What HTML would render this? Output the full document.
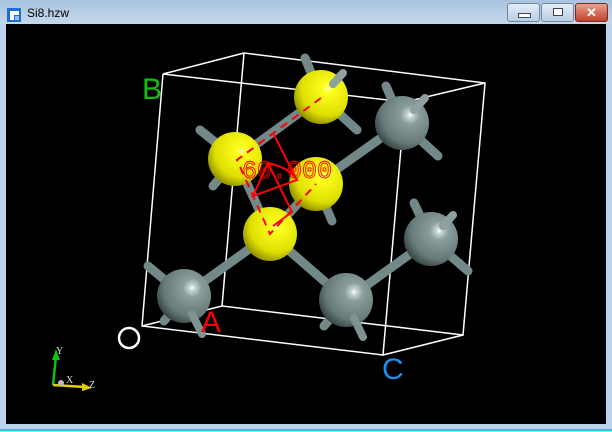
<!DOCTYPE html>
<html><head><style>
body{margin:0;width:612px;height:432px;overflow:hidden;background:#bcd3ea;font-family:"Liberation Sans",sans-serif;position:relative}
.tb{position:absolute;left:0;top:0;width:612px;height:24px;background:linear-gradient(#a9c3df,#c4d8ec)}
.title{position:absolute;left:27px;top:6px;font-size:12px;color:#000}
.btn{position:absolute;top:3px;width:31px;height:17px;border:1px solid #6b85a3;border-radius:3px;background:linear-gradient(#e4edf7,#b9cde3)}
.vp{position:absolute;left:6px;top:24px;width:600px;height:400px;background:#000}
</style></head><body>
<div class="tb"></div>
<svg style="position:absolute;left:7px;top:8px" width="14" height="14"><rect width="14" height="14" fill="#1b6fd0"/><rect x="3" y="3" width="9" height="4" fill="#fff"/><rect x="3" y="3" width="4" height="9" fill="#fff"/><rect x="8" y="8" width="4" height="4" fill="#8fc0f0"/></svg>
<div class="title">Si8.hzw</div>
<div class="btn" style="left:507px"><div style="position:absolute;left:10px;top:9px;width:11px;height:3px;background:#fff;border:1px solid #445"></div></div>
<div class="btn" style="left:541px"><div style="position:absolute;left:11px;top:4px;width:8px;height:6px;background:#fff;border:1px solid #445"></div></div>
<div class="btn" style="left:575px;background:linear-gradient(#e7a08f,#c2432c);border-color:#7a2a20;color:#fff;font-weight:bold;font-size:13px;text-align:center;line-height:17px">✕</div>
<div class="vp"></div>
<div style="position:absolute;left:0;top:429px;width:612px;height:2px;background:#3cc3d8"></div>
<svg style="position:absolute;left:0;top:0" width="612" height="432">
<defs>
<radialGradient id="y" cx="0.62" cy="0.35" r="0.7"><stop offset="0" stop-color="#ffffe0"/><stop offset="0.1" stop-color="#ffff20"/><stop offset="0.7" stop-color="#dede00"/><stop offset="1" stop-color="#8a8a00"/></radialGradient>
<radialGradient id="g" cx="0.65" cy="0.35" r="0.7"><stop offset="0" stop-color="#ffffff"/><stop offset="0.08" stop-color="#c8d4d4"/><stop offset="0.25" stop-color="#8a9c9c"/><stop offset="0.75" stop-color="#667a7a"/><stop offset="1" stop-color="#3a4646"/></radialGradient>
</defs>
<g stroke="#fff" stroke-width="1.5" fill="none">
<polyline points="244,53 485,83 463,335 222,306 244,53"/>
<polyline points="163,74 405,102 383,355 142,326 163,74"/>
<line x1="244" y1="53" x2="163" y2="74"/><line x1="485" y1="83" x2="405" y2="102"/>
<line x1="463" y1="335" x2="383" y2="355"/><line x1="222" y1="306" x2="142" y2="326"/>
</g>
<g stroke="#738888" stroke-width="9" stroke-linecap="round">
<line x1="236" y1="159" x2="321" y2="97"/><line x1="316" y1="184" x2="402" y2="123"/>
<line x1="270" y1="234" x2="184" y2="296"/><line x1="270" y1="234" x2="346" y2="300"/>
<line x1="346" y1="300" x2="431" y2="239"/><line x1="236" y1="159" x2="270" y2="234"/>
<line x1="316" y1="184" x2="270" y2="234"/>
<line x1="236" y1="159" x2="200" y2="130"/><line x1="236" y1="159" x2="213" y2="186"/>
<line x1="321" y1="97" x2="305" y2="58"/><line x1="321" y1="97" x2="357" y2="130"/>
<line x1="402" y1="123" x2="386" y2="86"/><line x1="402" y1="123" x2="438" y2="156"/>
<line x1="316" y1="184" x2="332" y2="221"/>
<line x1="184" y1="296" x2="148" y2="266"/><line x1="184" y1="296" x2="164" y2="321"/>
<line x1="346" y1="300" x2="324" y2="326"/>
<line x1="431" y1="239" x2="414" y2="203"/><line x1="431" y1="239" x2="468" y2="271"/>
</g>
<circle cx="321" cy="97" r="27" fill="url(#y)"/>
<circle cx="402" cy="123" r="27" fill="url(#g)"/>
<line x1="414" y1="110" x2="425" y2="98" stroke="#8fa0a0" stroke-width="8" stroke-linecap="round"/>
<line x1="333" y1="84" x2="343" y2="73" stroke="#8fa0a0" stroke-width="8" stroke-linecap="round"/>
<circle cx="235" cy="159" r="27" fill="url(#y)"/>
<circle cx="316" cy="184" r="27" fill="url(#y)"/>
<circle cx="270" cy="234" r="27" fill="url(#y)"/>
<circle cx="431" cy="239" r="27" fill="url(#g)"/>
<line x1="443" y1="226" x2="453" y2="215" stroke="#8fa0a0" stroke-width="8" stroke-linecap="round"/>
<circle cx="184" cy="296" r="27" fill="url(#g)"/>
<circle cx="346" cy="300" r="27" fill="url(#g)"/>
<line x1="192" y1="314" x2="202" y2="334" stroke="#7f9292" stroke-width="8" stroke-linecap="round"/>
<line x1="354" y1="318" x2="363" y2="337" stroke="#7f9292" stroke-width="8" stroke-linecap="round"/>
<g stroke="#f00" stroke-width="2" fill="none">
<polyline points="321,98 237,160 270,234 316,184" stroke-dasharray="8,6"/>
<polyline points="273,133 297,180 253,196 268,163 292,212 273,226"/>
<path d="M268,163 Q290,168 297,180"/>
</g>
<text x="242" y="178" font-family="Liberation Mono,monospace" font-size="25" fill="none" stroke="#f00" stroke-width="0.9">60.000</text>
<text x="142" y="99" font-size="30" fill="#10c010">B</text>
<text x="201" y="332" font-size="30" fill="#f00">A</text>
<text x="382" y="379" font-size="30" fill="#1a8ff0">C</text>
<circle cx="129" cy="338" r="10" fill="none" stroke="#fff" stroke-width="2.5"/>
<line x1="53" y1="385" x2="56" y2="356" stroke="#10c010" stroke-width="2.5"/>
<polygon points="56,349 52,360 60,360" fill="#10c010"/>
<line x1="53" y1="385" x2="85" y2="387" stroke="#e0d000" stroke-width="2.5"/>
<polygon points="92,388 82,383 82,391" fill="#e0d000"/>
<circle cx="61" cy="383" r="3" fill="#bbb"/>
<g font-family="Liberation Serif,serif" font-size="10" fill="#ddd"><text x="56" y="354">Y</text><text x="66" y="383">X</text><text x="89" y="388">Z</text></g>
</svg>
</body></html>
